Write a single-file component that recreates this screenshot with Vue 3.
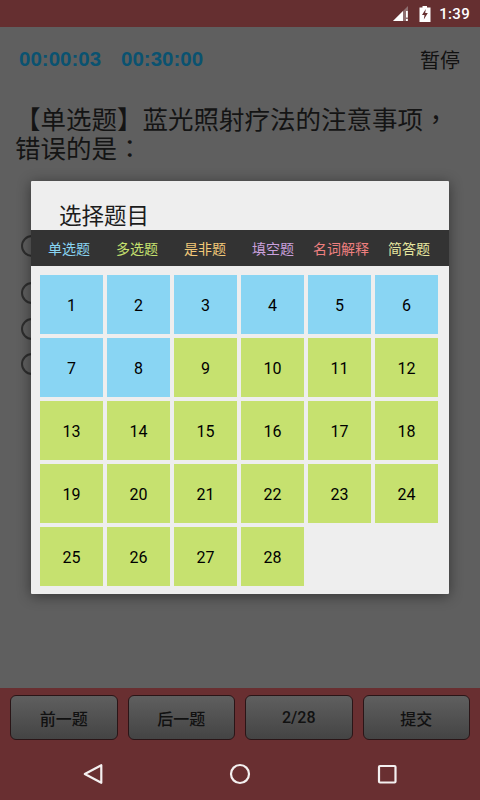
<script setup>
const tabs = [
  { label: '单选题', color: '#89d5f3' },
  { label: '多选题', color: '#c6e16f' },
  { label: '是非题', color: '#f2c879' },
  { label: '填空题', color: '#c9a0dc' },
  { label: '名词解释', color: '#ee8080' },
  { label: '简答题', color: '#e6e6a0' }
]
const cells = Array.from({ length: 28 }, (_, i) => i + 1)
const radios = [
  { id: 1, gap: 'r1' },
  { id: 2, gap: 'r2' },
  { id: 3, gap: 'r3' },
  { id: 4, gap: 'r4' }
]
const actions = ['前一题', '后一题', '2/28', '提交']
</script>

<template>
  <div class="page">
    <header class="status">
      <svg class="sig" width="17" height="16" viewBox="0 0 17 16">
        <path d="M0 15 L15 0 V15 Z" fill="#8f7071" />
        <path d="M0 15 L10 5 V15 Z" fill="#fff" />
        <rect x="13" y="5" width="1.8" height="6.5" fill="#fff" />
        <rect x="13" y="13" width="1.8" height="2" fill="#fff" />
      </svg>
      <svg class="bat" width="12" height="16" viewBox="0 0 12 16">
        <path d="M3.5 0 H8 V1.5 H11.5 V16 H0.5 V1.5 H3.5 Z" fill="#fff" />
        <path d="M6.8 3 L3 9 H5.5 L4.8 13.5 L8.8 7 H6.2 Z" fill="#652f30" />
      </svg>
      <span class="clock">1:39</span>
    </header>

    <main class="content">
      <div class="timers">
        <span class="time">00:00:03</span>
        <span class="time second">00:30:00</span>
        <span class="pause">暂停</span>
      </div>
      <p class="question">【单选题】蓝光照射疗法的注意事项，错误的是：</p>
      <div class="radios">
        <span v-for="r in radios" :key="r.id" class="radio" :class="r.gap"></span>
      </div>

      <section class="dialog">
        <h2 class="title">选择题目</h2>
        <nav class="tabs">
          <span v-for="t in tabs" :key="t.label" class="tab" :style="{ color: t.color }">{{ t.label }}</span>
        </nav>
        <div class="grid">
          <div v-for="n in cells" :key="n" class="cell" :class="n <= 8 ? 'blue' : 'green'">{{ n }}</div>
        </div>
      </section>
    </main>

    <footer class="footer">
      <div class="actions">
        <button v-for="a in actions" :key="a" class="btn">{{ a }}</button>
      </div>
      <div class="nav">
        <svg width="24" height="24" viewBox="0 0 24 24">
          <path d="M20.3 3.2 V20.8 L3.8 12 Z" fill="none" stroke="#f4f0f0" stroke-width="2.2" stroke-linejoin="round" />
        </svg>
        <svg width="24" height="24" viewBox="0 0 24 24">
          <circle cx="12" cy="12" r="9" fill="none" stroke="#f4f0f0" stroke-width="2.2" />
        </svg>
        <svg width="24" height="24" viewBox="0 0 24 24">
          <rect x="4" y="4" width="16.5" height="16.5" rx="1" fill="none" stroke="#f4f0f0" stroke-width="2.2" />
        </svg>
      </div>
    </footer>
  </div>
</template>

<style scoped>
.page {
  width: 480px;
  height: 800px;
  display: flex;
  flex-direction: column;
  overflow: hidden;
  font-family: Roboto, "Noto Sans CJK SC", sans-serif;
  color: #111;
  background: #606060;
}
.status {
  height: 27px;
  flex: none;
  background: #652f30;
  display: flex;
  align-items: center;
  justify-content: flex-end;
  padding-right: 10px;
  box-sizing: border-box;
}
.sig { margin-right: 9px; margin-top: 1px; }
.bat { margin-right: 8px; margin-top: 1px; }
.clock { color: #fff; font-size: 15px; font-weight: 500; letter-spacing: 0.3px; }
.content {
  flex: 1;
  position: relative;
  min-height: 0;
  background: #5f5f5f;
}
.timers {
  display: flex;
  align-items: center;
  height: 24px;
  margin-top: 20px;
  padding: 0 20px 0 19px;
}
.time {
  font-family: "Liberation Sans", sans-serif;
  font-size: 20.5px;
  font-weight: 700;
  color: #0a5270;
}
.second { margin-left: 20px; }
.pause { margin-left: auto; font-size: 20px; color: #111; }
.question {
  margin: 35px 0 0;
  padding: 0 15px;
  font-family: Roboto, "Noto Sans CJK TC", sans-serif;
  font-size: 25.5px;
  line-height: 29px;
  color: #141414;
}
.radios {
  display: flex;
  flex-direction: column;
  align-items: flex-start;
  padding-left: 21px;
}
.radio {
  width: 22px;
  height: 22px;
  box-sizing: border-box;
  border: 2px solid #2e2e2e;
  border-radius: 50%;
}
.r1 { margin-top: 71px; }
.r2 { margin-top: 25px; }
.r3 { margin-top: 14px; }
.r4 { margin-top: 13px; }
.dialog {
  position: absolute;
  left: 31px;
  top: 154px;
  width: 418px;
  height: 413px;
  background: #eeeeee;
  box-shadow: 0 2px 14px rgba(0, 0, 0, 0.45);
  border-radius: 1px;
  display: flex;
  flex-direction: column;
}
.title {
  margin: 0;
  height: 49px;
  box-sizing: border-box;
  padding: 21px 0 0 28px;
  font-size: 22.5px;
  line-height: 28px;
  font-weight: 400;
  color: #1c1c1c;
  flex: none;
  overflow: hidden;
}
.tabs {
  flex: none;
  height: 36px;
  background: #333333;
  display: grid;
  grid-template-columns: repeat(6, 68px);
  padding-left: 4px;
  align-items: center;
}
.tab { text-align: center; font-size: 14px; white-space: nowrap; }
.grid {
  display: grid;
  grid-template-columns: repeat(6, 63px);
  grid-auto-rows: 59px;
  gap: 4px;
  padding: 9px 9px 8px;
}
.cell {
  display: flex;
  align-items: center;
  justify-content: center;
  padding-top: 1px;
  box-sizing: border-box;
  font-size: 16px;
  color: #000;
}
.blue { background: #89d5f3; }
.green { background: #c6e16f; }
.footer {
  height: 112px;
  flex: none;
  background: #692f31;
  display: flex;
  flex-direction: column;
}
.actions {
  display: flex;
  gap: 10px;
  padding: 7px 10px 0;
  height: 52px;
  box-sizing: border-box;
  flex: none;
}
.btn {
  flex: 1;
  height: 45px;
  padding: 0;
  border: 1px solid #2a1517;
  border-radius: 6px;
  background: linear-gradient(#5f5f5f, #444444);
  font-family: inherit;
  font-size: 16px;
  font-weight: 500;
  color: #111;
}
.nav {
  flex: 1;
  display: grid;
  grid-template-columns: repeat(3, 147px);
  justify-content: center;
  justify-items: center;
  align-items: center;
  padding-top: 7px;
}
</style>
